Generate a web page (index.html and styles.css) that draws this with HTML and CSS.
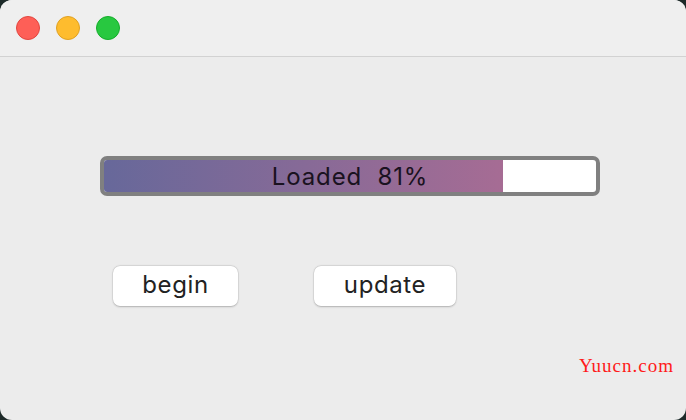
FILE: index.html
```html
<!DOCTYPE html>
<html>
<head>
<meta charset="utf-8">
<link rel="stylesheet" href="styles.css">
</head>
<body>
<div class="window">
  <div class="titlebar">
    <span class="light red"></span>
    <span class="light yellow"></span>
    <span class="light green"></span>
  </div>
  <div class="content">
    <div class="progress">
      <div class="fill" style="width:81%"></div>
      <div class="label">Loaded&nbsp;&nbsp;81%</div>
    </div>
    <div class="buttons">
      <button class="btn btn-begin">begin</button>
      <button class="btn btn-update">update</button>
    </div>
    <div class="watermark">Yuucn.com</div>
  </div>
</div>
</body>
</html>
```
FILE: styles.css
```css
html, body {
  margin: 0;
  padding: 0;
  width: 686px;
  height: 420px;
  background: #1d2a29;
  overflow: hidden;
}
.window {
  width: 686px;
  height: 420px;
  border-radius: 12px;
  overflow: hidden;
  background: #ececec;
  display: flex;
  flex-direction: column;
  font-family: Inter, "Noto Sans", sans-serif;
}
.titlebar {
  height: 56px;
  background: #efefef;
  border-bottom: 1px solid #d2d2d2;
  display: flex;
  align-items: center;
  padding-left: 16px;
  gap: 16px;
  box-sizing: content-box;
}
.light {
  width: 24px;
  height: 24px;
  border-radius: 50%;
  box-sizing: border-box;
}
.red { background: #fe5f57; border: 1px solid #e2463f; }
.yellow { background: #febc2e; border: 1px solid #e0a122; }
.green { background: #28c840; border: 1px solid #14ae2a; }
.content {
  flex: 1;
  display: flex;
  flex-direction: column;
  padding: 99px 0 0 100px;
}
.progress {
  position: relative;
  width: 500px;
  height: 40px;
  box-sizing: border-box;
  border: 4px solid #808080;
  border-radius: 7px;
  background: #ffffff;
  overflow: hidden;
}
.fill {
  height: 100%;
  background: linear-gradient(to right, #67689a, #a66c94);
}
.label {
  position: absolute;
  inset: 0;
  display: flex;
  align-items: center;
  justify-content: center;
  font-size: 24px;
  color: #1a1220;
  letter-spacing: 0.9px;
}
.buttons {
  display: flex;
  gap: 76px;
  margin-top: 70px;
  padding-left: 13px;
}
.btn {
  height: 40px;
  border: none;
  border-radius: 7px;
  background: #ffffff;
  box-shadow: 0 0.5px 2px rgba(0,0,0,0.22), 0 0 0 0.5px rgba(0,0,0,0.08);
  font-family: Inter, "Noto Sans", sans-serif;
  font-size: 24px;
  letter-spacing: 0.6px;
  color: #222222;
  padding: 0 0 3px 0;
}
.btn-begin { width: 125px; }
.btn-update { width: 142px; }
.watermark {
  align-self: flex-end;
  margin-top: 49px;
  margin-right: 12px;
  font-family: "Liberation Serif", serif;
  font-size: 19px;
  color: #ff1a1a;
  letter-spacing: 1px;
}
```
